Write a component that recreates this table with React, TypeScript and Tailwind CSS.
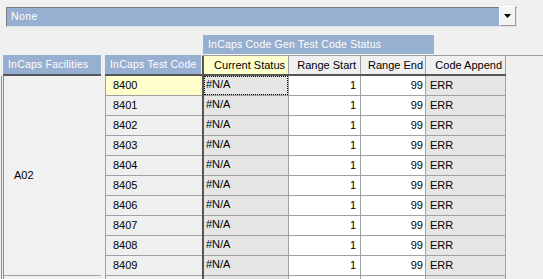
import React from "react";

const codes = ["8400","8401","8402","8403","8404","8405","8406","8407","8408","8409"];

export default function App() {
  return (
    <div className="w-[543px] h-[279px] overflow-hidden bg-[#f0f0f0] text-black" style={{ fontFamily: '"Liberation Sans", Arial, sans-serif' }}>
      {/* dropdown */}
      <div className="pt-[7px] pl-[6px]">
        <div className="w-[511px] h-[20px] flex items-stretch bg-[#97afd0] border-t border-l border-t-[#7c7c7c] border-l-[#7c7c7c] border-b border-r border-b-[#e4e4e4] border-r-[#e4e4e4]">
          <div className="flex-1 pl-[4px] flex items-center text-white text-[10.5px] tracking-[0.4px]">None</div>
          <div className="w-[17px] flex items-center justify-center bg-[#f4f4f4] border border-[#9a9a9a] border-t-[#ffffff] border-l-[#ffffff] -mt-[2px] mb-[0px]">
            <svg width="7" height="4" viewBox="0 0 7 4"><polygon points="0,0 7,0 3.5,4" fill="#000" /></svg>
          </div>
        </div>
      </div>

      {/* grid */}
      <div className="mt-[8px] flex items-start">
        {/* facilities */}
        <div className="ml-[1px] w-[100px] flex flex-col">
          <div className="h-[20px]" />
          <div className="ml-[2px] h-[19px] bg-[#97afd0] text-white text-[10.5px] tracking-[0.2px] pl-[5px] flex items-center pt-[1px]">InCaps Facilities</div>
          <div className="ml-[2px] h-[2px] bg-[#555555]" />
          <div className="border-l border-[#8c8c8c] pl-[1px]">
            <div className="h-[200px] border-l border-b border-[#8c8c8c] border-b-[#a0a0a0] bg-[#f1f1f1] flex items-center pl-[10px] text-[11px]">A02</div>
          </div>
          <div className="border-l border-[#8c8c8c] pl-[1px]">
            <div className="h-[20px] border-l border-b border-[#8c8c8c] border-b-[#a0a0a0] bg-[#f1f1f1]" />
          </div>
        </div>

        {/* test code */}
        <div className="ml-[4px] w-[97px] flex flex-col">
          <div className="h-[20px]" />
          <div className="w-[96px] h-[19px] bg-[#97afd0] text-white text-[10.5px] tracking-[0.2px] pl-[5px] flex items-center pt-[1px] whitespace-nowrap overflow-hidden">InCaps Test Code</div>
          <div className="h-[2px] bg-[#555555]" />
          {codes.map((c, i) => (
            <div key={c} className={`h-[20px] border-l border-b border-[#a0a0a0] pl-[7px] flex items-center text-[11px] ${i === 0 ? "bg-[#ffffcc]" : "bg-[#efefef]"}`}>{c}</div>
          ))}
          <div className="h-[20px] border-l border-b border-[#a0a0a0] bg-[#efefef]" />
        </div>

        {/* right group */}
        <div className="flex-1 flex flex-col">
          <div className="ml-[1px] w-[231px] h-[19px] mb-[1px] bg-[#97afd0] text-white text-[10.5px] tracking-[0.2px] pl-[5px] flex items-center">InCaps Code Gen Test Code Status</div>
          <div className="border-t border-[#a0a0a0]">
            <div className="w-[304px] flex border-l-2 border-b-2 border-[#555555] text-[11px]">
              <div className="w-[85px] h-[18px] bg-[#ffffcc] border-r border-[#a0a0a0] flex items-center justify-end pr-[3px]">Current Status</div>
              <div className="w-[72px] h-[18px] border-r border-[#a0a0a0] flex items-center justify-end pr-[4px]">Range Start</div>
              <div className="w-[65px] h-[18px] border-r border-[#a0a0a0] flex items-center justify-end pr-[2px]">Range End</div>
              <div className="w-[80px] h-[18px] border-r border-[#a0a0a0] flex items-center justify-end pr-[3px]">Code Append</div>
            </div>
          </div>
          <div className="w-[304px] border-l-2 border-[#555555] text-[11px]">
            {codes.map((c, i) => (
              <div key={c} className="flex h-[20px]">
                <div className="w-[85px] border-r border-b border-[#a0a0a0] bg-[#e6e6e6] flex">
                  {i === 0 ? (
                    <div className="flex-1 border border-dotted border-black flex items-center pl-[1px] pb-[2px]">#N/A</div>
                  ) : (
                    <div className="flex-1 flex items-center pl-[2px] pb-[2px]">#N/A</div>
                  )}
                </div>
                <div className="w-[72px] border-r border-b border-[#a0a0a0] bg-white flex items-center justify-end pr-[4px]">1</div>
                <div className="w-[65px] border-r border-b border-[#a0a0a0] bg-white flex items-center justify-end pr-[2px]">99</div>
                <div className="w-[80px] border-r border-b border-[#a0a0a0] bg-[#e6e6e6] flex items-center pl-[4px]">ERR</div>
              </div>
            ))}
            <div className="flex h-[20px]">
              <div className="w-[85px] border-r border-b border-[#a0a0a0] bg-[#e6e6e6]" />
              <div className="w-[72px] border-r border-b border-[#a0a0a0] bg-white" />
              <div className="w-[65px] border-r border-b border-[#a0a0a0] bg-white" />
              <div className="w-[80px] border-r border-b border-[#a0a0a0] bg-[#e6e6e6]" />
            </div>
          </div>
        </div>
      </div>
    </div>
  );
}
